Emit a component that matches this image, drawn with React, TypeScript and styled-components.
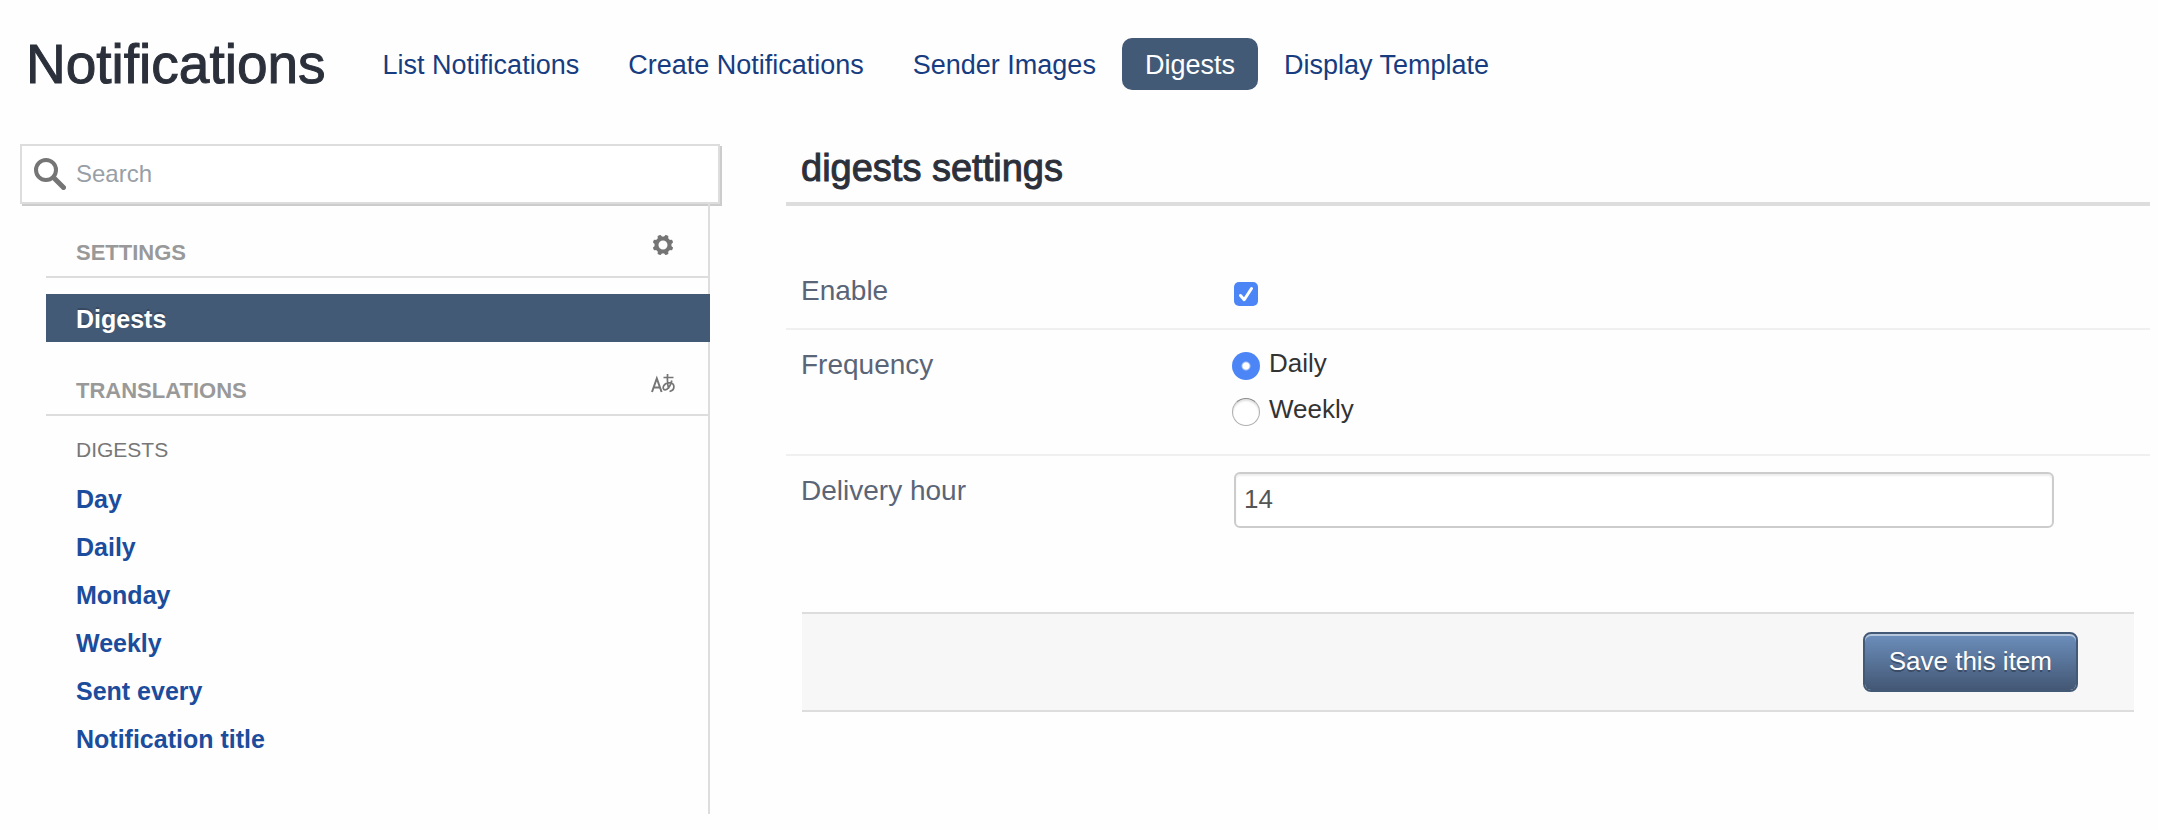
import React from "react";
import styled, { createGlobalStyle } from "styled-components";

const GlobalStyle = createGlobalStyle`
  *, *::before, *::after { box-sizing: border-box; }
  body {
    margin: 0;
    background: #fefefe;
    color: #333;
    font-family: "Liberation Sans", Arial, sans-serif;
    font-size: 26px;
    line-height: 32px;
  }
`;

const Page = styled.div`
  padding: 28px 8px 16px 20px;
`;

const Header = styled.header`
  display: flex;
  align-items: center;
  gap: 34px;
  height: 72px;
  padding-left: 6px;
`;

const Title = styled.h1`
  margin: 0;
  color: #2b303b;
  font-size: 55px;
  font-weight: 400;
  line-height: 72px;
  -webkit-text-stroke: 1px #2b303b;
`;

const Nav = styled.nav`
  display: flex;
  gap: 3px;
`;

const NavLink = styled.a<{ $active?: boolean }>`
  padding: 11px 23px 9px;
  border-radius: 10px;
  background: ${(p) => (p.$active ? "#435a77" : "transparent")};
  color: ${(p) => (p.$active ? "#fff" : "#173c80")};
  font-size: 27px;
  line-height: 32px;
  text-decoration: none;
  white-space: nowrap;
`;

const Columns = styled.div`
  display: grid;
  grid-template-columns: 175fr 341fr;
  column-gap: 66px;
  margin-top: 44px;
`;

const SearchBox = styled.label`
  display: flex;
  align-items: center;
  gap: 10px;
  height: 60px;
  padding-left: 12px;
  border: 2px solid #ddd;
  background: #fff;
  box-shadow: 2px 2px 0 #ccc;
`;

const SearchInput = styled.input`
  flex: 1;
  min-width: 0;
  padding: 0;
  border: 0;
  outline: 0;
  background: none;
  color: #333;
  font: 24px/32px "Liberation Sans", Arial, sans-serif;
  &::placeholder { color: #999fa6; opacity: 1; }
`;

const Side = styled.div`
  margin: 0 10px 0 26px;
  padding-bottom: 52px;
  border-right: 2px solid #ddd;
`;

const SideHeading = styled.div`
  display: flex;
  justify-content: space-between;
  height: 74px;
  padding: 31px 32px 0 30px;
  border-bottom: 2px solid #ddd;
`;

const SideTitle = styled.h2`
  margin: 0;
  color: #999;
  font-size: 22px;
  line-height: 36px;
`;

const IconSlot = styled.span`
  display: flex;
  align-items: center;
  justify-content: center;
  width: 26px;
  height: 20px;
`;

const SideList = styled.ul<{ $bleed?: boolean }>`
  margin: ${(p) => (p.$bleed ? "16px -2px 0 0" : "0")};
  padding: 0;
  list-style: none;
`;

const SideLink = styled.a<{ $active?: boolean }>`
  display: block;
  padding: 9px 30px 7px;
  background: ${(p) => (p.$active ? "#435a77" : "transparent")};
  color: ${(p) => (p.$active ? "#fff" : "#1c4c9c")};
  text-shadow: ${(p) => (p.$active ? "0 -2px 0 rgba(0, 0, 0, 0.2)" : "none")};
  font-size: 25px;
  font-weight: 700;
  line-height: 32px;
  text-decoration: none;
`;

const SideCaption = styled.h3`
  margin: 18px 0 8px;
  padding-left: 30px;
  color: #777;
  font-size: 21px;
  font-weight: 400;
  line-height: 32px;
`;

const PanelTitle = styled.h2`
  margin: 0 0 50px;
  padding: 4px 15px 14px;
  border-bottom: 4px solid #ddd;
  color: #2b303b;
  font-size: 38px;
  font-weight: 400;
  line-height: 40px;
  -webkit-text-stroke: 1px #2b303b;
`;

const Field = styled.div<{ $last?: boolean }>`
  display: grid;
  grid-template-columns: 433px 1fr;
  padding: 16px 96px 16px 15px;
  border-bottom: ${(p) => (p.$last ? "0" : "2px solid #f0f0f0")};
`;

const FieldLabel = styled.label`
  padding-top: 3px;
  color: #5a6577;
  font-size: 28px;
  line-height: 32px;
`;

const CheckCell = styled.div`
  display: flex;
  align-items: center;
  height: 40px;
  padding-top: 4px;
`;

const Checkbox = styled.input`
  appearance: none;
  width: 24px;
  height: 24px;
  margin: 0;
  border: 1px solid #aaa;
  border-radius: 5px;
  background: #fff;
  &:checked {
    border: 0;
    background: #4c86f6
      url("data:image/svg+xml,%3Csvg xmlns='http://www.w3.org/2000/svg' viewBox='0 0 24 24' fill='none' stroke='white' stroke-width='3' stroke-linecap='round' stroke-linejoin='round'%3E%3Cpath d='M6.500 13.500l3.700 4.200L17.500 6.500'/%3E%3C/svg%3E")
      center / 24px 24px no-repeat;
  }
`;

const RadioGroup = styled.div`
  display: flex;
  flex-direction: column;
  gap: 13px;
  padding: 1px 0 12px;
`;

const RadioLabel = styled.label`
  display: flex;
  align-items: flex-start;
  gap: 9px;
  margin-left: -2px;
  line-height: 32px;
`;

const Radio = styled.input`
  appearance: none;
  flex: none;
  width: 28px;
  height: 28px;
  margin: 5px 0 0;
  border: 1px solid #b0b0b0;
  border-top-color: #8a8a8a;
  border-radius: 50%;
  background: #fff;
  box-shadow: inset 0 2px 2px rgba(0, 0, 0, 0.12);
  &:checked {
    border: 0;
    background: radial-gradient(circle, #fff 3px, #4c86f6 5px);
    box-shadow: none;
  }
`;

const TextInput = styled.input`
  width: 100%;
  height: 56px;
  padding: 0 8px 2px;
  border: 2px solid #ccc;
  border-radius: 6px;
  background: #fff;
  box-shadow: inset 0 2px 2px rgba(0, 0, 0, 0.07);
  color: #555;
  font: 26px/32px "Liberation Sans", Arial, sans-serif;
`;

const Actions = styled.div`
  display: flex;
  justify-content: flex-end;
  margin: 68px 16px 0;
  padding: 18px 56px 18px 0;
  border: solid #ddd;
  border-width: 2px 0;
  background: #f7f7f7;
`;

const SaveButton = styled.button`
  height: 60px;
  padding: 0 24px 2px;
  border: 2px solid #435a77;
  border-radius: 8px;
  background: linear-gradient(#6c8fbc, #435774) padding-box;
  box-shadow: inset 0 2px 0 rgba(255, 255, 255, 0.5);
  color: #fff;
  font: 26px/32px "Liberation Sans", Arial, sans-serif;
  text-shadow: 0 2px 0 rgba(0, 0, 0, 0.3);
  cursor: pointer;
`;

const SearchIcon = () => (
  <svg width="32" height="32" viewBox="0 0 32 32" fill="none" stroke="#757575" aria-hidden="true">
    <circle cx="12" cy="12" r="10" strokeWidth="4" />
    <path d="M19.500 19.500L29.500 29.500" strokeWidth="5" strokeLinecap="round" />
  </svg>
);

const GEAR_TEETH = [22.5, 67.5, 112.5, 157.5, 202.5, 247.5, 292.5, 337.5];

const GearIcon = () => (
  <svg width="20" height="20" viewBox="0 0 20 20" aria-hidden="true">
    <circle cx="10" cy="10" r="6.500" fill="none" stroke="#757575" strokeWidth="4" />
    {GEAR_TEETH.map((angle) => (
      <path
        key={angle}
        d="M7.400 3L8.500 -0.400h3L12.600 3z"
        fill="#757575"
        transform={`rotate(${angle} 10 10)`}
      />
    ))}
  </svg>
);

const LanguageIcon = () => (
  <svg width="24" height="20" viewBox="0 0 24 20" fill="none" stroke="#757575" strokeWidth="2" aria-hidden="true">
    <path d="M1 19L5.800 5.500L10.600 19M2.800 14.500h6" />
    <path d="M12.500 4.500h10M16.600 1c-.4 5-.4 10 1 15M20.800 7.500c-.8 4.500-3.600 9-6.600 9.300c-2 .2-2.600-2.300-1.300-4.300c2-3.200 9.300-4 9.900.4c.4 2.800-1.500 5-4.300 5.600" strokeWidth="1.700" />
  </svg>
);

const NAV = ["List Notifications", "Create Notifications", "Sender Images", "Digests", "Display Template"];
const TRANSLATIONS = ["Day", "Daily", "Monday", "Weekly", "Sent every", "Notification title"];

export default function App() {
  return (
    <>
      <GlobalStyle />
      <Page>
        <Header>
          <Title>Notifications</Title>
          <Nav>
            {NAV.map((name) => (
              <NavLink key={name} href="#" $active={name === "Digests"}>
                {name}
              </NavLink>
            ))}
          </Nav>
        </Header>
        <Columns>
          <aside>
            <SearchBox>
              <SearchIcon />
              <SearchInput type="text" placeholder="Search" aria-label="Search" />
            </SearchBox>
            <Side>
              <SideHeading>
                <SideTitle>SETTINGS</SideTitle>
                <IconSlot><GearIcon /></IconSlot>
              </SideHeading>
              <SideList $bleed>
                <li><SideLink href="#" $active>Digests</SideLink></li>
              </SideList>
              <SideHeading>
                <SideTitle>TRANSLATIONS</SideTitle>
                <IconSlot><LanguageIcon /></IconSlot>
              </SideHeading>
              <SideCaption>DIGESTS</SideCaption>
              <SideList>
                {TRANSLATIONS.map((name) => (
                  <li key={name}><SideLink href="#">{name}</SideLink></li>
                ))}
              </SideList>
            </Side>
          </aside>
          <main>
            <PanelTitle>digests settings</PanelTitle>
            <form onSubmit={(e) => e.preventDefault()}>
              <Field>
                <FieldLabel htmlFor="enable">Enable</FieldLabel>
                <CheckCell>
                  <Checkbox id="enable" type="checkbox" defaultChecked />
                </CheckCell>
              </Field>
              <Field>
                <FieldLabel as="span" id="frequency">Frequency</FieldLabel>
                <RadioGroup role="radiogroup" aria-labelledby="frequency">
                  <RadioLabel>
                    <Radio type="radio" name="frequency" defaultChecked />
                    Daily
                  </RadioLabel>
                  <RadioLabel>
                    <Radio type="radio" name="frequency" />
                    Weekly
                  </RadioLabel>
                </RadioGroup>
              </Field>
              <Field $last>
                <FieldLabel htmlFor="hour">Delivery hour</FieldLabel>
                <TextInput id="hour" type="text" defaultValue="14" />
              </Field>
              <Actions>
                <SaveButton type="submit">Save this item</SaveButton>
              </Actions>
            </form>
          </main>
        </Columns>
      </Page>
    </>
  );
}
